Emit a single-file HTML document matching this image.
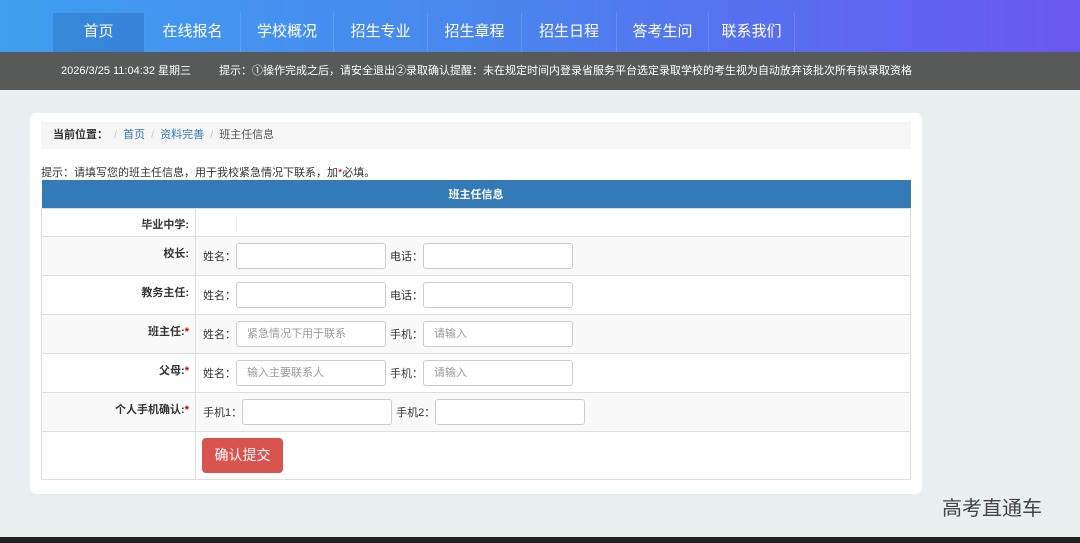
<!DOCTYPE html>
<html><head><meta charset="utf-8"><style>
*{margin:0;padding:0;box-sizing:border-box}
body{width:1080px;height:543px;overflow:hidden;background:#e9eef0;font-family:"Liberation Sans","Noto Sans CJK SC",sans-serif;font-size:12px;color:#333;position:relative}
.top{position:absolute;left:0;top:0;width:1080px;height:52px;background:linear-gradient(90deg,#3f9ff0 0%,#4a86ee 45%,#5a6bf0 75%,#6a58ef 100%)}
.nav{position:absolute;left:53px;top:13px;height:39px;display:flex}
.nav div{height:39px;line-height:38px;text-align:center;color:#fff;font-size:15px;border-right:1px solid rgba(255,255,255,.15)}
.nav .on{background:rgba(30,90,170,.3)}
.bar{position:absolute;left:0;top:52px;width:1080px;height:38px;background:#585a5a;color:#fff;font-size:11px;line-height:38px}
.card{position:absolute;left:30px;top:113px;width:892px;height:381px;background:#fff;border-radius:6px}
.bc{position:absolute;left:11px;top:9px;width:870px;height:27px;background:#f5f5f5;line-height:27px;padding-left:12px;font-size:11px;color:#555}
.bc b{color:#333}.bc a{color:#337ab7}.bc i{color:#ccc;font-style:normal;margin:0 6px}
.tip{position:absolute;left:11px;top:51px;font-size:11px}
table{position:absolute;left:11px;top:67px;width:870px;border-collapse:collapse;font-size:11px}
th{background:#337ab7;color:#fff;height:28px;font-size:11px}
td{border:1px solid #ddd;vertical-align:top}
td.l{width:154px;text-align:right;font-weight:bold;padding:8px 6px 0 0}
tr:nth-child(odd) td{background:#f9f9f9}
.f{display:flex;align-items:center;padding:6px 0 0 7px;color:#333}
.in{width:150px;height:26px;border:1px solid #ccc;border-radius:3px;background:#fff;margin:0 4px 0 0;color:#999;padding-left:10px;line-height:24px;font-size:11px}
.r{color:#c00}
.btn{margin:6px 0 0 6px;width:81px;height:35px;background:#d9534f;border-radius:4px;color:#fff;font-size:14px;line-height:35px;text-align:center}
</style></head><body>
<div class="top"></div>
<div class="nav"><div class="on" style="width:92px">首页</div><div style="width:96px">在线报名</div><div style="width:93px">学校概况</div><div style="width:94px">招生专业</div><div style="width:94px">招生章程</div><div style="width:95px">招生日程</div><div style="width:92px">答考生问</div><div style="width:86px">联系我们</div></div>
<div class="bar"><span style="margin-left:61px">2026/3/25 11:04:32 星期三</span><span style="margin-left:28px">提示：①操作完成之后，请安全退出②录取确认提醒：未在规定时间内登录省服务平台选定录取学校的考生视为自动放弃该批次所有拟录取资格</span></div>
<div class="card">
<div class="bc"><b>当前位置：</b><i>/</i><a>首页</a><i>/</i><a>资料完善</a><i>/</i>班主任信息</div>
<div class="tip">提示：请填写您的班主任信息，用于我校紧急情况下联系，加<span class="r">*</span>必填。</div>
<table>
<tr><th colspan="2">班主任信息</th></tr>
<tr style="height:28px"><td class="l" style="padding-top:7px">毕业中学:</td><td><div style="margin:6px 0 0 40px;border-left:1px solid #eee;height:16px"></div></td></tr>
<tr style="height:39px"><td class="l">校长:</td><td><div class="f">姓名：<div class="in"></div>电话：<div class="in"></div></div></td></tr>
<tr style="height:39px"><td class="l">教务主任:</td><td><div class="f">姓名：<div class="in"></div>电话：<div class="in"></div></div></td></tr>
<tr style="height:39px"><td class="l">班主任:<span class="r">*</span></td><td><div class="f">姓名：<div class="in">紧急情况下用于联系</div>手机：<div class="in">请输入</div></div></td></tr>
<tr style="height:39px"><td class="l">父母:<span class="r">*</span></td><td><div class="f">姓名：<div class="in">输入主要联系人</div>手机：<div class="in">请输入</div></div></td></tr>
<tr style="height:39px"><td class="l">个人手机确认:<span class="r">*</span></td><td><div class="f">手机1：<div class="in"></div>手机2：<div class="in"></div></div></td></tr>
<tr style="height:48px"><td class="l"></td><td><div class="btn">确认提交</div></td></tr>
</table>
</div>
<div style="position:absolute;left:942px;top:492px;font-size:20px;color:#444">高考直通车</div>
<div style="position:absolute;left:0;top:537px;width:1080px;height:6px;background:#222"></div>
</body></html>
